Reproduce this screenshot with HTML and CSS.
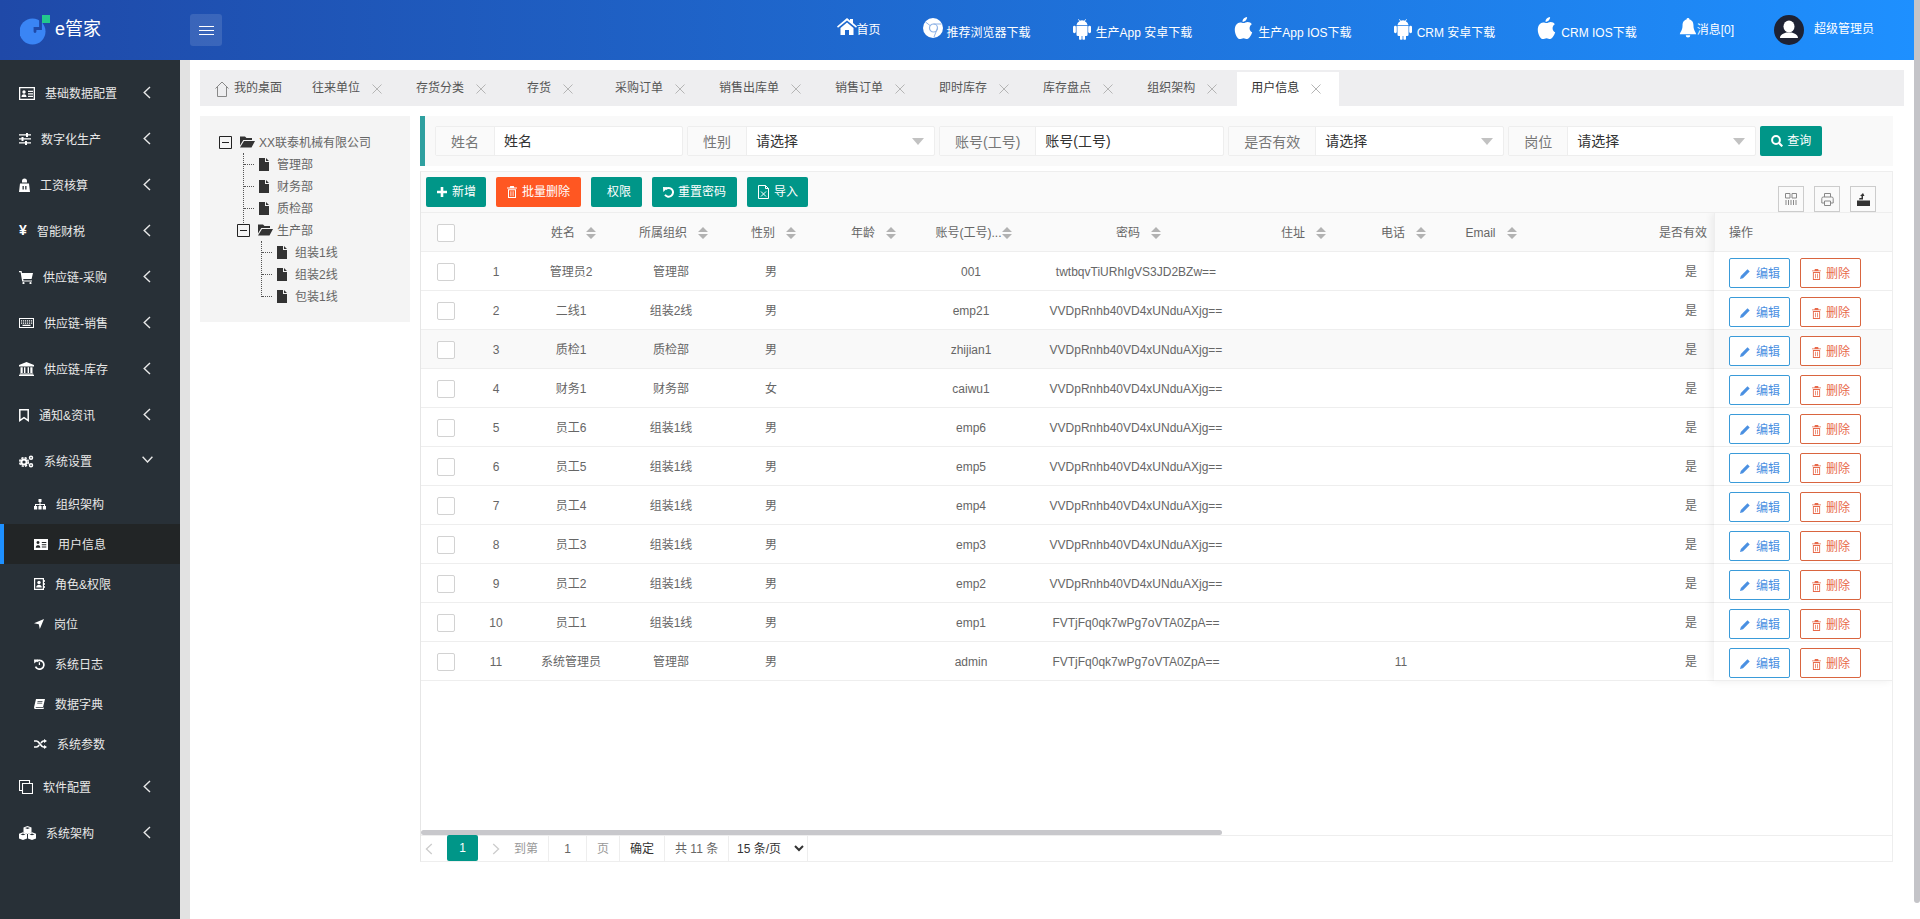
FILE: index.html
```html
<!DOCTYPE html>
<html lang="zh">
<head>
<meta charset="utf-8">
<title>e管家</title>
<link rel="stylesheet" href="styles.css">
</head>
<body>
<svg class="sprite" xmlns="http://www.w3.org/2000/svg">
  <symbol id="s-card" viewBox="0 0 16 13"><path fill-rule="evenodd" d="M0 0h16v13H0ZM1.300 1.300v10.400h13.400V1.300Z"/><circle cx="5" cy="5" r="1.700"/><path d="M2.500 10c0-2 1.200-2.700 2.500-2.700S7.500 8 7.500 10ZM9 3.800h5V5H9ZM9 6.300h5v1.200H9ZM9 8.800h5V10H9Z"/></symbol>
  <symbol id="s-cardfill" viewBox="0 0 14 11"><path fill-rule="evenodd" d="M0 0h14v11H0ZM4 2a1.500 1.500 0 1 0 .01 0ZM1.800 8.800h4.500c0-2-1-2.600-2.200-2.600S1.800 6.800 1.800 8.800ZM7.800 3v1h4.500V3ZM7.800 5.200v1h4.500v-1ZM7.800 7.400v1h4.500v-1Z"/></symbol>
  <symbol id="s-sliders" viewBox="0 0 12 12"><path d="M0 1.300h12v1.300H0ZM0 5.300h12v1.300H0ZM0 9.300h12v1.300H0Z"/><path d="M7 0h2v4H7ZM2.500 4h2v4h-2ZM6 8h2v4H6Z"/></symbol>
  <symbol id="s-secret" viewBox="0 0 11 14"><path fill-rule="evenodd" d="M3 3a2.500 2.500 0 0 1 5 0v1.500H3ZM1 5.500h9l1 8.500H0ZM3.500 8v3.500h1.300V8ZM6.200 8v3.500h1.300V8Z"/></symbol>
  <symbol id="s-cart" viewBox="0 0 14 13"><path d="M0 0h2.600L3 2h11l-1.400 6H4.200l.3 1.400H13v1.100H3.200L1.600 1.200H0Z"/><circle cx="4.500" cy="12" r="1.100"/><circle cx="11.500" cy="12" r="1.100"/></symbol>
  <symbol id="s-keyboard" viewBox="0 0 15 10"><path fill-rule="evenodd" d="M0 0h15v10H0ZM1 1v8h13V1Z"/><path d="M2 2.300h1.200v1.200H2ZM4 2.300h1.200v1.200H4ZM6 2.300h1.200v1.200H6ZM8 2.300h1.200v1.200H8ZM10 2.300h1.200v1.200H10ZM12 2.300h1.200v1.200H12ZM2 4.500h1.200v1.200H2ZM4 4.500h1.200v1.200H4ZM6 4.500h1.200v1.200H6ZM8 4.500h1.200v1.200H8ZM10 4.500h1.200v1.200H10ZM12 4.500h1.200v1.200H12ZM3.500 6.800h8v1.100h-8Z"/></symbol>
  <symbol id="s-bank" viewBox="0 0 15 14"><path d="M7.500 0 15 3v1.400H0V3ZM1.500 5.200h2.200v5.900H1.500ZM5 5.200h1.400v5.900H5ZM8.600 5.200H10v5.900H8.600ZM11.300 5.200h2.200v5.900h-2.200ZM.8 11.500h13.400v1H.8ZM0 12.800h15V14H0Z"/></symbol>
  <symbol id="s-bookmark" viewBox="0 0 10 13"><path fill="none" stroke="currentColor" stroke-width="1.500" d="M.8.800h8.400v10.700L5 8.600.8 11.500Z"/></symbol>
  <symbol id="s-cogs" viewBox="0 0 15 13"><circle cx="5" cy="7" r="2.600" fill="none" stroke="currentColor" stroke-width="2"/><circle cx="5" cy="7" r="4.300" fill="none" stroke="currentColor" stroke-width="1.600" stroke-dasharray="2.200 1.200"/><circle cx="12" cy="2.800" r="1.500" fill="none" stroke="currentColor" stroke-width="1.500"/><circle cx="12" cy="10.200" r="1.500" fill="none" stroke="currentColor" stroke-width="1.500"/></symbol>
  <symbol id="s-sitemap" viewBox="0 0 12 11"><path d="M4.500 0h3v3h-3ZM5.500 3h1v2h4.500v2h-1V6H6.500v1h-1V6H2v1H1V5h4.500ZM0 7h3.200v3.500H0ZM4.400 7h3.200v3.500H4.400ZM8.800 7H12v3.500H8.800Z"/></symbol>
  <symbol id="s-addr" viewBox="0 0 11 12"><path fill-rule="evenodd" d="M0 0h10v12H0ZM1.200 1.200v9.600h7.600V1.200Z"/><circle cx="5" cy="4.500" r="1.700"/><path d="M2.200 9.500c0-2 1.300-2.800 2.800-2.800s2.800.8 2.800 2.800ZM10.200 2H11v2h-.8ZM10.200 5H11v2h-.8ZM10.200 8H11v2h-.8Z"/></symbol>
  <symbol id="s-arrow" viewBox="0 0 10 10"><path d="M10 0 5.800 10 4.800 5.200 0 4.200Z"/></symbol>
  <symbol id="s-history" viewBox="0 0 11 11"><path fill="none" stroke="currentColor" stroke-width="1.700" d="M2.400 2.600A4.400 4.400 0 1 1 1.500 7.700"/><path d="M0 .4l4.500.1L.3 4.600ZM4.800 3.200H6v2.700H4.800Z"/></symbol>
  <symbol id="s-book" viewBox="0 0 11 10"><path fill-rule="evenodd" d="M2 0h9L9 8.300H2.300c-.8 0-.9.600-.4.800H9.300l.2-.9.500.2-.4 1.600H1.300C.3 10-.1 9 .1 8ZM3.500 2v.8h5V2ZM3.200 3.800v.8h5v-.8Z"/></symbol>
  <symbol id="s-random" viewBox="0 0 13 10"><path fill="none" stroke="currentColor" stroke-width="1.700" d="M0 2h2.500c3 0 4 6 7 6H11M0 8h2.500c1.300 0 2-1 2.700-2M7 4c.7-1 1.400-2 2.500-2H11"/><path d="M10 0l3 2-3 2ZM10 6l3 2-3 2Z"/></symbol>
  <symbol id="s-clone" viewBox="0 0 14 14"><path fill="none" stroke="currentColor" stroke-width="1.100" d="M3.500 10.500h-3v-10h10v3"/><path fill="none" stroke="currentColor" stroke-width="1.100" d="M3.500 3.500h10v10h-10Z"/></symbol>
  <symbol id="s-cubes" viewBox="0 0 17 14"><path fill-rule="evenodd" d="M8.500 0l4 1.500v5l-4 1.500-4-1.500v-5ZM8.500 1.200 6 2.100l2.500.9 2.500-.9Z"/><path fill-rule="evenodd" d="M4 6.300l4 1.500v4.700L4 14l-4-1.500V7.800ZM4 7.500l-2.500.9L4 9.300l2.500-.9Z"/><path fill-rule="evenodd" d="M13 6.300l4 1.500v4.700L13 14l-4-1.500V7.800ZM13 7.500l-2.500.9 2.500.9 2.500-.9Z"/></symbol>
  <symbol id="s-chev" viewBox="0 0 8 13"><path fill="none" stroke="currentColor" stroke-width="1.400" d="M7 1 1.200 6.500 7 12"/></symbol>
  <symbol id="s-chevd" viewBox="0 0 11 7"><path fill="none" stroke="currentColor" stroke-width="1.400" d="M.6.800 5.500 6 10.400.800"/></symbol>
  <symbol id="s-home" viewBox="0 0 20 17"><path d="M10 0l3 2.500V1h3v4.100L20 8.600l-1 1.200-9-7.300-9 7.300-1-1.200ZM3.500 9.900 10 4.500l6.500 5.400V17H12v-5H8v5H3.500Z"/></symbol>
  <symbol id="s-chrome" viewBox="0 0 20 20"><circle cx="10" cy="10" r="10" fill="#fff"/><circle cx="10.500" cy="10" r="4" fill="none" stroke="#8fb3e6" stroke-width="1.200"/><path fill="none" stroke="#8fb3e6" stroke-width="1" d="M14.500 10 11 19M7 7.500 2.500 4M10.500 6h8"/></symbol>
  <symbol id="s-android" viewBox="0 0 18 24" preserveAspectRatio="none"><path d="M3.500 7.500a5.500 5.500 0 0 1 2.700-4L5 1.400l.5-.4 1.300 2.100a5 5 0 0 1 4.400 0L12.500 1l.5.4-1.200 2.100a5.500 5.500 0 0 1 2.700 4Z"/><path d="M3.500 8.500h11v9.700a1.300 1.300 0 0 1-1.300 1.300H12v3a1.300 1.300 0 0 1-2.600 0v-3H8.600v3a1.300 1.300 0 0 1-2.600 0v-3H4.800a1.300 1.300 0 0 1-1.300-1.300Z"/><rect x="0" y="8.500" width="2.800" height="8" rx="1.400"/><rect x="15.200" y="8.500" width="2.800" height="8" rx="1.400"/></symbol>
  <symbol id="s-apple" viewBox="0 0 19 24"><path d="M13.400 0c.2 2.700-2.200 5.400-5 5.200C8.200 2.600 10.700.2 13.400 0ZM9.600 6.600c1.200 0 2.600-1.200 4.500-1.200 1.900 0 3.500.9 4.500 2.400-3.600 2.200-3 7.300.4 8.900-.9 2.800-3.200 7.300-5.500 7.300-1.400 0-2.200-.9-3.900-.9-1.800 0-2.700.9-4 .9C2.700 24 0 18.500 0 13.800 0 9 2.900 5.900 5.800 5.900c1.500 0 2.800.7 3.800.7Z"/></symbol>
  <symbol id="s-bell" viewBox="0 0 18 22"><path d="M9 0a1.600 1.600 0 0 1 1.600 1.700C14 2.500 15 5.500 15 8c0 6 3 8 3 10H0c0-2 3-4 3-10 0-2.500 1-5.500 4.400-6.300A1.600 1.600 0 0 1 9 0ZM6.500 19h5a2.500 2.500 0 0 1-5 0Z"/></symbol>
  <symbol id="s-avatar" viewBox="0 0 30 30"><circle cx="15" cy="15" r="15" fill="#1e2233"/><ellipse cx="15" cy="11.500" rx="5.500" ry="6" fill="#fff"/><path fill="#fff" d="M6 23c0-3.500 4-4.500 6-5.500h6c2 1 6 2 6 5.500Z"/></symbol>
  <symbol id="s-homeline" viewBox="0 0 14 16"><path fill="none" stroke="currentColor" stroke-width="1" d="M.5 7.500 7 1l6.500 6.500M2.500 6v9.500h9V6"/></symbol>
  <symbol id="s-x" viewBox="0 0 10 10"><path fill="none" stroke="currentColor" stroke-width="1" d="M.5.500l9 9M9.500.500l-9 9"/></symbol>
  <symbol id="s-minus" viewBox="0 0 13 13"><path fill="none" stroke="currentColor" stroke-width="1" d="M.5.500h12v12H.500ZM3 6.500h7"/></symbol>
  <symbol id="s-folder" viewBox="0 0 15 12"><path d="M0 .500h5L6.500 2H12v2H3.300L0 9.500ZM4 5h11l-3.500 6.500H0Z"/></symbol>
  <symbol id="s-file" viewBox="0 0 10 13"><path d="M0 0h6v4h4v9H0ZM7 0l3 3H7Z"/></symbol>
  <symbol id="s-sort" viewBox="0 0 10 12"><path d="M5 0l5 5H0ZM0 7h10l-5 5Z"/></symbol>
  <symbol id="s-plus" viewBox="0 0 10 10"><path d="M3.700 0h2.600v3.700H10v2.600H6.300V10H3.700V6.300H0V3.700h3.700Z"/></symbol>
  <symbol id="s-trash" viewBox="0 0 10 12"><path fill-rule="evenodd" d="M3.200 0h3.600l.5 1.500H10v1H0v-1h2.700ZM1 3.300h8V12H1ZM2 4.300V11h6V4.300Z"/><path d="M3.500 5.200h.8v5h-.8ZM5.700 5.200h.8v5h-.8Z"/></symbol>
  <symbol id="s-undo" viewBox="0 0 11 12"><path fill="none" stroke="currentColor" stroke-width="2" d="M2.500 3.200A4.400 4.400 0 1 1 2 8.800"/><path d="M0 1l5 .2L.3 6Z"/></symbol>
  <symbol id="s-excel" viewBox="0 0 11 14"><path fill="none" stroke="currentColor" stroke-width="1" d="M.5.500h7l3 3v10H.5ZM7.500.500v3h3M3 6.500l5 5M8 6.500l-5 5"/></symbol>
  <symbol id="s-search" viewBox="0 0 12 12"><circle cx="5" cy="5" r="3.900" fill="none" stroke="currentColor" stroke-width="2"/><path stroke="currentColor" stroke-width="2.200" d="M8 8l3.300 3.300"/></symbol>
  <symbol id="s-pencil" viewBox="0 0 10 10"><path d="M7.500.300 9.700 2.500 3 9.200 0 10l.8-3Z"/></symbol>
  <symbol id="s-cols" viewBox="0 0 12 12"><path fill="none" stroke="currentColor" stroke-width="1" d="M.5.500h4.500v4.500H.5ZM7 .500h4.500v4.500H7ZM1 7v5M3.500 7v5M6 7v5M8.500 7v5M11 7v5"/></symbol>
  <symbol id="s-print" viewBox="0 0 13 13"><path fill="none" stroke="currentColor" stroke-width="1" d="M3.500 4V.5h6V4M3 10H.8V5.500a1.500 1.500 0 0 1 1.500-1.500h8.400a1.500 1.500 0 0 1 1.500 1.500V10H10M3.500 8h6v4.500h-6Z"/></symbol>
  <symbol id="s-export" viewBox="0 0 13 13"><path d="M0 7.500h13V13H0ZM2 6.500 2.500 5h2V3H3L6 0l1.500 3H6v3.500Z"/></symbol>
</svg>

<div class="app">
  <div class="page">
    <header class="top">
      <div class="brand">
        <svg class="logo" viewBox="0 0 30 30"><circle cx="12.500" cy="16.500" r="13" fill="#3a85f5"/><path fill="none" stroke="#1f49a8" stroke-width="2.800" stroke-linecap="round" d="M20.500 4V13.500H15v3"/><rect x="22" y="0" width="8" height="8" fill="#22c98d"/></svg>
        <span class="brand-name">e管家</span>
      </div>
      <button class="burger" type="button"><span></span><span></span><span></span></button>
      <nav class="top-nav">
        <a class="top-item tight"><svg class="ic ic-home"><use href="#s-home"/></svg><span class="top-text up">首页</span></a>
        <a class="top-item chrome-item"><svg class="ic ic-chrome"><use href="#s-chrome"/></svg><span class="top-text">推荐浏览器下载</span></a>
        <a class="top-item"><svg class="ic ic-android"><use href="#s-android"/></svg><span class="top-text">生产App 安卓下载</span></a>
        <a class="top-item"><svg class="ic ic-apple"><use href="#s-apple"/></svg><span class="top-text">生产App IOS下载</span></a>
        <a class="top-item"><svg class="ic ic-android"><use href="#s-android"/></svg><span class="top-text">CRM 安卓下载</span></a>
        <a class="top-item"><svg class="ic ic-apple"><use href="#s-apple"/></svg><span class="top-text">CRM IOS下载</span></a>
        <a class="top-item tight"><svg class="ic ic-bell"><use href="#s-bell"/></svg><span class="top-text up">消息[0]</span></a>
        <a class="top-user"><svg class="ic ic-avatar"><use href="#s-avatar"/></svg><span>超级管理员</span></a>
      </nav>
    </header>

    <div class="body">
      <aside class="side">
        <a class="nav-item"><svg class="ic ic-card"><use href="#s-card"/></svg><span>基础数据配置</span><svg class="ic ic-chev"><use href="#s-chev"/></svg></a>
        <a class="nav-item"><svg class="ic ic-sliders"><use href="#s-sliders"/></svg><span>数字化生产</span><svg class="ic ic-chev"><use href="#s-chev"/></svg></a>
        <a class="nav-item"><svg class="ic ic-secret"><use href="#s-secret"/></svg><span>工资核算</span><svg class="ic ic-chev"><use href="#s-chev"/></svg></a>
        <a class="nav-item"><b class="yen">¥</b><span>智能财税</span><svg class="ic ic-chev"><use href="#s-chev"/></svg></a>
        <a class="nav-item"><svg class="ic ic-cart"><use href="#s-cart"/></svg><span>供应链-采购</span><svg class="ic ic-chev"><use href="#s-chev"/></svg></a>
        <a class="nav-item"><svg class="ic ic-keyboard"><use href="#s-keyboard"/></svg><span>供应链-销售</span><svg class="ic ic-chev"><use href="#s-chev"/></svg></a>
        <a class="nav-item"><svg class="ic ic-bank"><use href="#s-bank"/></svg><span>供应链-库存</span><svg class="ic ic-chev"><use href="#s-chev"/></svg></a>
        <a class="nav-item"><svg class="ic ic-bookmark"><use href="#s-bookmark"/></svg><span>通知&amp;资讯</span><svg class="ic ic-chev"><use href="#s-chev"/></svg></a>
        <a class="nav-item"><svg class="ic ic-cogs"><use href="#s-cogs"/></svg><span>系统设置</span><svg class="ic ic-chevd"><use href="#s-chevd"/></svg></a>
        <a class="nav-sub"><svg class="ic ic-sitemap"><use href="#s-sitemap"/></svg><span>组织架构</span></a>
        <a class="nav-sub active"><svg class="ic ic-cardfill"><use href="#s-cardfill"/></svg><span>用户信息</span></a>
        <a class="nav-sub"><svg class="ic ic-addr"><use href="#s-addr"/></svg><span>角色&amp;权限</span></a>
        <a class="nav-sub"><svg class="ic ic-arrow"><use href="#s-arrow"/></svg><span>岗位</span></a>
        <a class="nav-sub"><svg class="ic ic-history"><use href="#s-history"/></svg><span>系统日志</span></a>
        <a class="nav-sub"><svg class="ic ic-book"><use href="#s-book"/></svg><span>数据字典</span></a>
        <a class="nav-sub"><svg class="ic ic-random"><use href="#s-random"/></svg><span>系统参数</span></a>
        <a class="nav-item"><svg class="ic ic-clone"><use href="#s-clone"/></svg><span>软件配置</span><svg class="ic ic-chev"><use href="#s-chev"/></svg></a>
        <a class="nav-item"><svg class="ic ic-cubes"><use href="#s-cubes"/></svg><span>系统架构</span><svg class="ic ic-chev"><use href="#s-chev"/></svg></a>
      </aside>
      <div class="gutter"></div>

      <main class="content">
        <div class="tabs">
          <a class="tab tab-home"><svg class="ic ic-homeline"><use href="#s-homeline"/></svg><span>我的桌面</span></a>
          <a class="tab"><span>往来单位</span><svg class="ic ic-x"><use href="#s-x"/></svg></a>
          <a class="tab"><span>存货分类</span><svg class="ic ic-x"><use href="#s-x"/></svg></a>
          <a class="tab tab-short"><span>存货</span><svg class="ic ic-x"><use href="#s-x"/></svg></a>
          <a class="tab"><span>采购订单</span><svg class="ic ic-x"><use href="#s-x"/></svg></a>
          <a class="tab"><span>销售出库单</span><svg class="ic ic-x"><use href="#s-x"/></svg></a>
          <a class="tab"><span>销售订单</span><svg class="ic ic-x"><use href="#s-x"/></svg></a>
          <a class="tab"><span>即时库存</span><svg class="ic ic-x"><use href="#s-x"/></svg></a>
          <a class="tab"><span>库存盘点</span><svg class="ic ic-x"><use href="#s-x"/></svg></a>
          <a class="tab"><span>组织架构</span><svg class="ic ic-x"><use href="#s-x"/></svg></a>
          <a class="tab tab-active"><span>用户信息</span><svg class="ic ic-x"><use href="#s-x"/></svg></a>
        </div>

        <div class="work">
          <section class="tree">
            <div class="tree-row"><svg class="ic ic-minus"><use href="#s-minus"/></svg><svg class="ic ic-folder"><use href="#s-folder"/></svg><span>XX联泰机械有限公司</span></div>
            <div class="tree-kids kids-top">
              <div class="tree-row leaf"><svg class="ic ic-file"><use href="#s-file"/></svg><span>管理部</span></div>
              <div class="tree-row leaf"><svg class="ic ic-file"><use href="#s-file"/></svg><span>财务部</span></div>
              <div class="tree-row leaf"><svg class="ic ic-file"><use href="#s-file"/></svg><span>质检部</span></div>
              <div class="tree-row branch"><svg class="ic ic-minus"><use href="#s-minus"/></svg><svg class="ic ic-folder"><use href="#s-folder"/></svg><span>生产部</span></div>
              <div class="tree-kids kids-sub">
                <div class="tree-row leaf"><svg class="ic ic-file"><use href="#s-file"/></svg><span>组装1线</span></div>
                <div class="tree-row leaf"><svg class="ic ic-file"><use href="#s-file"/></svg><span>组装2线</span></div>
                <div class="tree-row leaf"><svg class="ic ic-file"><use href="#s-file"/></svg><span>包装1线</span></div>
              </div>
            </div>
          </section>

          <section class="panel">
            <div class="search">
              <div class="field"><label>姓名</label><div class="value">姓名</div></div>
              <div class="field"><label>性别</label><div class="value select">请选择</div></div>
              <div class="field"><label>账号(工号)</label><div class="value">账号(工号)</div></div>
              <div class="field"><label>是否有效</label><div class="value select">请选择</div></div>
              <div class="field"><label>岗位</label><div class="value select">请选择</div></div>
              <button class="btn btn-query" type="button"><svg class="ic ic-search"><use href="#s-search"/></svg>查询</button>
            </div>

            <div class="grid">
              <div class="toolbar">
                <button class="btn btn-add" type="button"><svg class="ic ic-plus"><use href="#s-plus"/></svg>新增</button>
                <button class="btn btn-danger" type="button"><svg class="ic ic-trash"><use href="#s-trash"/></svg>批量删除</button>
                <button class="btn btn-perm" type="button">权限</button>
                <button class="btn btn-reset" type="button"><svg class="ic ic-undo"><use href="#s-undo"/></svg>重置密码</button>
                <button class="btn btn-import" type="button"><svg class="ic ic-excel"><use href="#s-excel"/></svg>导入</button>
                <div class="tools">
                  <span class="tool"><svg class="ic ic-cols"><use href="#s-cols"/></svg></span>
                  <span class="tool"><svg class="ic ic-print"><use href="#s-print"/></svg></span>
                  <span class="tool dark"><svg class="ic ic-export"><use href="#s-export"/></svg></span>
                </div>
              </div>

              <div class="grid-body">
                <table class="data">
                  <colgroup><col class="c50"><col class="c50"><col class="c100"><col class="c100"><col class="c100"><col class="c100"><col class="c100"><col class="c230"><col class="c100"><col class="c100"><col class="c75"><col class="c330"></colgroup>
                  <thead><tr>
                    <th><span class="check"></span></th><th></th>
                    <th class="s">姓名<svg class="ic ic-sort"><use href="#s-sort"/></svg></th>
                    <th class="s">所属组织<svg class="ic ic-sort"><use href="#s-sort"/></svg></th>
                    <th class="s">性别<svg class="ic ic-sort"><use href="#s-sort"/></svg></th>
                    <th class="s">年龄<svg class="ic ic-sort"><use href="#s-sort"/></svg></th>
                    <th class="s tight-th">账号(工号)...<svg class="ic ic-sort flush"><use href="#s-sort"/></svg></th>
                    <th class="s">密码<svg class="ic ic-sort"><use href="#s-sort"/></svg></th>
                    <th class="s">住址<svg class="ic ic-sort"><use href="#s-sort"/></svg></th>
                    <th class="s">电话<svg class="ic ic-sort"><use href="#s-sort"/></svg></th>
                    <th class="s">Email<svg class="ic ic-sort"><use href="#s-sort"/></svg></th>
                    <th class="s">是否有效<svg class="ic ic-sort"><use href="#s-sort"/></svg></th>
                  </tr></thead>
                  <tbody>
                    <tr><td><span class="check"></span></td><td>1</td><td>管理员2</td><td>管理部</td><td>男</td><td></td><td>001</td><td>twtbqvTiURhIgVS3JD2BZw==</td><td></td><td></td><td></td><td>是</td></tr>
                    <tr><td><span class="check"></span></td><td>2</td><td>二线1</td><td>组装2线</td><td>男</td><td></td><td>emp21</td><td>VVDpRnhb40VD4xUNduAXjg==</td><td></td><td></td><td></td><td>是</td></tr>
                    <tr class="hover"><td><span class="check"></span></td><td>3</td><td>质检1</td><td>质检部</td><td>男</td><td></td><td>zhijian1</td><td>VVDpRnhb40VD4xUNduAXjg==</td><td></td><td></td><td></td><td>是</td></tr>
                    <tr><td><span class="check"></span></td><td>4</td><td>财务1</td><td>财务部</td><td>女</td><td></td><td>caiwu1</td><td>VVDpRnhb40VD4xUNduAXjg==</td><td></td><td></td><td></td><td>是</td></tr>
                    <tr><td><span class="check"></span></td><td>5</td><td>员工6</td><td>组装1线</td><td>男</td><td></td><td>emp6</td><td>VVDpRnhb40VD4xUNduAXjg==</td><td></td><td></td><td></td><td>是</td></tr>
                    <tr><td><span class="check"></span></td><td>6</td><td>员工5</td><td>组装1线</td><td>男</td><td></td><td>emp5</td><td>VVDpRnhb40VD4xUNduAXjg==</td><td></td><td></td><td></td><td>是</td></tr>
                    <tr><td><span class="check"></span></td><td>7</td><td>员工4</td><td>组装1线</td><td>男</td><td></td><td>emp4</td><td>VVDpRnhb40VD4xUNduAXjg==</td><td></td><td></td><td></td><td>是</td></tr>
                    <tr><td><span class="check"></span></td><td>8</td><td>员工3</td><td>组装1线</td><td>男</td><td></td><td>emp3</td><td>VVDpRnhb40VD4xUNduAXjg==</td><td></td><td></td><td></td><td>是</td></tr>
                    <tr><td><span class="check"></span></td><td>9</td><td>员工2</td><td>组装1线</td><td>男</td><td></td><td>emp2</td><td>VVDpRnhb40VD4xUNduAXjg==</td><td></td><td></td><td></td><td>是</td></tr>
                    <tr><td><span class="check"></span></td><td>10</td><td>员工1</td><td>组装1线</td><td>男</td><td></td><td>emp1</td><td>FVTjFq0qk7wPg7oVTA0ZpA==</td><td></td><td></td><td></td><td>是</td></tr>
                    <tr><td><span class="check"></span></td><td>11</td><td>系统管理员</td><td>管理部</td><td>男</td><td></td><td>admin</td><td>FVTjFq0qk7wPg7oVTA0ZpA==</td><td></td><td>11</td><td></td><td>是</td></tr>
                  </tbody>
                </table>

                <table class="fixed">
                  <thead><tr><th>操作</th></tr></thead>
                  <tbody>
                    <tr><td><button class="op op-edit" type="button"><svg class="ic ic-pencil"><use href="#s-pencil"/></svg>编辑</button><button class="op op-del" type="button"><svg class="ic ic-trash2"><use href="#s-trash"/></svg>删除</button></td></tr>
                    <tr><td><button class="op op-edit" type="button"><svg class="ic ic-pencil"><use href="#s-pencil"/></svg>编辑</button><button class="op op-del" type="button"><svg class="ic ic-trash2"><use href="#s-trash"/></svg>删除</button></td></tr>
                    <tr class="hover"><td><button class="op op-edit" type="button"><svg class="ic ic-pencil"><use href="#s-pencil"/></svg>编辑</button><button class="op op-del" type="button"><svg class="ic ic-trash2"><use href="#s-trash"/></svg>删除</button></td></tr>
                    <tr><td><button class="op op-edit" type="button"><svg class="ic ic-pencil"><use href="#s-pencil"/></svg>编辑</button><button class="op op-del" type="button"><svg class="ic ic-trash2"><use href="#s-trash"/></svg>删除</button></td></tr>
                    <tr><td><button class="op op-edit" type="button"><svg class="ic ic-pencil"><use href="#s-pencil"/></svg>编辑</button><button class="op op-del" type="button"><svg class="ic ic-trash2"><use href="#s-trash"/></svg>删除</button></td></tr>
                    <tr><td><button class="op op-edit" type="button"><svg class="ic ic-pencil"><use href="#s-pencil"/></svg>编辑</button><button class="op op-del" type="button"><svg class="ic ic-trash2"><use href="#s-trash"/></svg>删除</button></td></tr>
                    <tr><td><button class="op op-edit" type="button"><svg class="ic ic-pencil"><use href="#s-pencil"/></svg>编辑</button><button class="op op-del" type="button"><svg class="ic ic-trash2"><use href="#s-trash"/></svg>删除</button></td></tr>
                    <tr><td><button class="op op-edit" type="button"><svg class="ic ic-pencil"><use href="#s-pencil"/></svg>编辑</button><button class="op op-del" type="button"><svg class="ic ic-trash2"><use href="#s-trash"/></svg>删除</button></td></tr>
                    <tr><td><button class="op op-edit" type="button"><svg class="ic ic-pencil"><use href="#s-pencil"/></svg>编辑</button><button class="op op-del" type="button"><svg class="ic ic-trash2"><use href="#s-trash"/></svg>删除</button></td></tr>
                    <tr><td><button class="op op-edit" type="button"><svg class="ic ic-pencil"><use href="#s-pencil"/></svg>编辑</button><button class="op op-del" type="button"><svg class="ic ic-trash2"><use href="#s-trash"/></svg>删除</button></td></tr>
                    <tr><td><button class="op op-edit" type="button"><svg class="ic ic-pencil"><use href="#s-pencil"/></svg>编辑</button><button class="op op-del" type="button"><svg class="ic ic-trash2"><use href="#s-trash"/></svg>删除</button></td></tr>
                  </tbody>
                </table>
              </div>

              <div class="hscroll"><div class="hthumb"></div></div>

              <div class="pager">
                <span class="pg-prev"><svg class="ic ic-pgchev"><use href="#s-chev"/></svg></span>
                <span class="pg-cur">1</span>
                <span class="pg-next"><svg class="ic ic-pgchev flip"><use href="#s-chev"/></svg></span>
                <span class="pg-text pg-goto">到第</span>
                <span class="pg-input">1</span>
                <span class="pg-text">页</span>
                <span class="pg-ok">确定</span>
                <span class="pg-total">共 11 条</span>
                <select class="pg-size"><option>15 条/页</option></select>
              </div>
            </div>
          </section>
        </div>
      </main>
    </div>
  </div>
  <div class="thumb"></div>
</div>
</body>
</html>
```

FILE: styles.css
```css
* { box-sizing: border-box; }
html, body { margin: 0; height: 100%; overflow: hidden; background: #fff; }
body { font: 12px/1.4 "Liberation Sans", "Noto Sans CJK SC", sans-serif; color: #666; }
.sprite { position: absolute; width: 0; height: 0; overflow: hidden; }
.ic { display: block; flex: none; fill: currentColor; }
button { font: inherit; margin: 0; cursor: pointer; }

.app { display: flex; height: 919px; }
.page { width: 1914px; display: flex; flex-direction: column; }
.thumb { width: 6px; height: 903px; background: #c4c4c8; border-radius: 0 0 3px 3px; }

/* top bar */
.top { height: 60px; flex: none; display: flex; align-items: center; padding-right: 40px; color: #fff; background: linear-gradient(to right, #1f49a8, #1e90ff); }
.brand { width: 190px; display: flex; align-items: center; padding-left: 20px; height: 60px; }
.logo { width: 30px; height: 30px; flex: none; }
.brand-name { font-size: 18px; line-height: 24px; margin: -2px 0 0 5px; }
.burger { width: 32px; height: 32px; padding: 0; border: 0; border-radius: 3px; background: rgba(255,255,255,.12); display: flex; flex-direction: column; align-items: center; justify-content: center; gap: 3px; }
.burger span { display: block; width: 15px; height: 1px; background: #fff; }
.top-nav { margin-left: auto; display: flex; align-items: flex-start; gap: 42px; height: 60px; }
.top-item { display: flex; align-items: flex-start; gap: 5px; margin-top: 17px; }
.top-item.tight { gap: 0; }
.chrome-item { gap: 4px; }
.top-text { line-height: 20px; margin-top: 6px; white-space: nowrap; }
.top-text.up { margin-top: 3px; }
.top-user { display: flex; align-items: center; gap: 10px; height: 60px; margin-left: -2px; }
.top-user span { margin-top: -1px; }
.ic-home { width: 20px; height: 17px; margin-top: 1px; }
.ic-chrome { width: 20px; height: 20px; margin-top: 1px; }
.ic-android { width: 18px; height: 22px; margin-top: 1px; }
.ic-apple { width: 19px; height: 22px; }
.ic-bell { width: 18px; height: 20px; margin-top: 1px; }
.ic-avatar { width: 30px; height: 30px; }

/* body */
.body { flex: 1; display: flex; min-height: 0; }
.side { width: 180px; flex: none; background: #283037; color: #e8e8e8; padding-top: 10px; }
.gutter { width: 10px; flex: none; background: #e2e2e2; }
.nav-item { height: 46px; display: flex; align-items: center; gap: 10px; padding-left: 19px; white-space: nowrap; }
.nav-item span { line-height: 16px; margin-top: 1px; }
.nav-sub { height: 40px; display: flex; align-items: center; gap: 10px; padding-left: 34px; }
.nav-sub span { line-height: 16px; margin-top: 2px; }
.nav-sub.active { background: #222526; border-left: 4px solid #1e90ff; padding-left: 30px; }
.ic-chev { width: 8px; height: 13px; margin-left: auto; margin-right: 29px; margin-top: -2px; }
.ic-chevd { width: 11px; height: 7px; margin-left: auto; margin-right: 27px; margin-top: -4px; }
.yen { width: 8px; font-size: 14px; line-height: 16px; color: #fff; font-weight: 700; margin-top: -2px; }
.ic-card { width: 16px; height: 13px; color: #fff; }
.ic-sliders { width: 12px; height: 12px; color: #fff; }
.ic-secret { width: 11px; height: 14px; color: #fff; }
.ic-cart { width: 14px; height: 13px; color: #fff; }
.ic-keyboard { width: 15px; height: 10px; color: #fff; }
.ic-bank { width: 15px; height: 14px; color: #fff; }
.ic-bookmark { width: 10px; height: 13px; color: #fff; }
.ic-cogs { width: 15px; height: 13px; color: #fff; }
.ic-sitemap { width: 12px; height: 11px; color: #fff; }
.ic-cardfill { width: 14px; height: 11px; color: #fff; }
.ic-addr { width: 11px; height: 12px; color: #fff; }
.ic-arrow { width: 10px; height: 10px; color: #fff; }
.ic-history { width: 11px; height: 11px; color: #fff; }
.ic-book { width: 11px; height: 10px; color: #fff; }
.ic-random { width: 13px; height: 10px; color: #fff; }
.ic-clone { width: 14px; height: 14px; color: #fff; }
.ic-cubes { width: 17px; height: 14px; color: #fff; }

/* content */
.content { flex: 1; min-width: 0; padding: 10px 10px 0; display: flex; flex-direction: column; }
.tabs { height: 36px; flex: none; background: #eeeef0; display: flex; align-items: flex-end; }
.tab { height: 34px; padding: 0 20px 0 14px; display: flex; align-items: center; gap: 12px; color: #555; white-space: nowrap; }
.tab span { margin-top: -1px; }
.tab-home { padding: 0 16px 0 15px; gap: 5px; width: 98px; }
.tab-short { padding: 0 28px 0 21px; }
.tab-active { background: #fff; color: #333; width: 102px; padding-right: 18px; }
.ic-homeline { width: 14px; height: 16px; color: #888; }
.ic-x { width: 10px; height: 10px; color: #b5b5b5; }

.work { display: flex; align-items: flex-start; gap: 10px; margin-top: 10px; }

/* tree */
.tree { width: 210px; flex: none; background: #f4f4f4; padding: 15px 0 15px 19px; color: #666; }
.tree-row { height: 22px; display: flex; align-items: center; position: relative; white-space: nowrap; }
.tree-row span { margin-top: 2px; }
.tree-row .ic-minus { margin-right: 8px; }
.tree-row .ic-folder { margin-right: 4px; }
.ic-minus { width: 13px; height: 13px; color: #222; }
.ic-folder { width: 15px; height: 12px; color: #333; }
.ic-file { width: 10px; height: 13px; color: #333; margin-right: 8px; }
.tree-kids { position: relative; }
.tree-kids::before { content: ""; position: absolute; left: 0; top: 0; border-left: 1px dotted #555; }
.kids-top { margin-left: 24px; }
.kids-top::before { height: 72px; }
.kids-sub { margin-left: 18px; }
.kids-sub::before { height: 56px; }
.leaf { padding-left: 16px; }
.leaf::before { content: ""; position: absolute; left: 1px; top: 11px; width: 10px; border-top: 1px dotted #555; }
.branch .ic-minus { margin-left: -6px; background: #f4f4f4; position: relative; }

/* search */
.panel { width: 1473px; flex: none; }
.search { height: 50px; background: #f9f9f9; border-left: 5px solid #2fa0a0; padding-left: 10px; display: flex; align-items: center; gap: 4px; }
.field { height: 30px; display: flex; border: 1px solid #eee; border-radius: 2px; background: #fff; }
.field label { padding: 0 15px; line-height: 30px; font-size: 14px; color: #777; background: #fafafa; border-right: 1px solid #eee; white-space: nowrap; }
.value { width: 187px; padding-left: 9px; line-height: 28px; font-size: 14px; color: #333; position: relative; }
.select::after { content: ""; position: absolute; right: 10px; top: 11px; border: 6px solid transparent; border-bottom: 0; border-top: 7px solid #c2c2c2; }

.btn { height: 30px; border: 0; border-radius: 2px; padding: 0 11px; color: #fff; background: #009688; display: inline-flex; align-items: center; white-space: nowrap; flex: none; }
.btn-query { width: 62px; padding: 0 10px 0 11px; gap: 4px; }
.ic-search { width: 12px; height: 12px; }
.ic-plus { width: 10px; height: 10px; margin-right: 5px; }
.ic-trash { width: 10px; height: 12px; margin-right: 5px; }
.ic-undo { width: 11px; height: 12px; margin-right: 4px; }
.ic-excel { width: 11px; height: 14px; margin-right: 5px; }
.btn-add { width: 60px; }
.btn-danger { background: #ff5722; width: 85px; }
.btn-perm { width: 51px; padding-left: 16px; }
.btn-reset { width: 85px; }
.btn-import { width: 61px; }

/* grid */
.grid { margin-top: 5px; border: 1px solid #eee; border-left-color: #e6e6e6; }
.toolbar { height: 41px; background: #fafafa; border-bottom: 1px solid #eee; display: flex; align-items: center; gap: 10px; padding: 0 16px 0 5px; }
.tools { margin-left: auto; align-self: flex-end; display: flex; gap: 10px; }
.tool { width: 26px; height: 26px; border: 1px solid #ccc; display: flex; align-items: center; justify-content: center; color: #888; }
.tool.dark { color: #333; }
.ic-cols { width: 12px; height: 12px; }
.ic-print { width: 13px; height: 13px; }
.ic-export { width: 13px; height: 13px; }

.grid-body { height: 617px; position: relative; overflow: hidden; }
table { border-collapse: separate; border-spacing: 0; table-layout: fixed; }
.data { width: 1435px; }
.c50 { width: 50px; } .c75 { width: 75px; } .c100 { width: 100px; } .c230 { width: 230px; } .c330 { width: 330px; }
th, td { height: 39px; padding: 2px 0 0; font-weight: 400; text-align: center; border-bottom: 1px solid #eee; color: #666; white-space: nowrap; }
th { background: #fafafa; height: 39px; }
th.s { padding-left: 5px; }
.ic-sort { display: inline-block; width: 10px; height: 12px; margin-left: 11px; vertical-align: -2px; color: #b2b2b2; }
.ic-sort.flush { margin-left: 0; }
.tight-th { padding-left: 6px; }
.check { display: inline-block; width: 18px; height: 18px; border: 1px solid #d2d2d2; border-radius: 2px; background: #fff; vertical-align: middle; }
.hover td { background: #f9f9f9; }

.fixed { position: absolute; top: 0; right: 0; width: 178px; background: #fff; box-shadow: -2px 0 8px rgba(0,0,0,.07); }
.fixed th { text-align: left; padding-left: 14px; border-left: 1px solid #eee; }
.fixed td { text-align: left; padding: 4px 0 0 15px; }
.op { width: 61px; height: 30px; background: #fff; border: 1px solid; border-radius: 2px; padding: 2px 0 0 10px; display: inline-flex; align-items: center; vertical-align: top; }
.op-edit { border-color: #3a9bd9; color: #4a90e2; margin-right: 10px; }
.op-del { border-color: #d9653f; color: #e8694a; }
.ic-pencil { width: 10px; height: 10px; margin-right: 6px; }
.ic-trash2 { width: 9px; height: 11px; margin-right: 5px; margin-left: 1px; }

.hscroll { height: 5px; }
.hthumb { width: 801px; height: 5px; background: #c8c8cc; border-radius: 3px; }

.pager { height: 26px; display: flex; align-items: stretch; color: #888; line-height: 26px; border-top: 1px solid #eee; margin-top: 0; }
.pg-prev { width: 26px; padding: 7px 0 0 4px; color: #ccc; }
.pg-next { width: 36px; padding: 7px 0 0 14px; color: #ccc; }
.pg-cur { width: 31px; height: 26px; margin-top: -1px; background: #009688; color: #fff; text-align: center; border-radius: 2px; }
.ic-pgchev { width: 8px; height: 12px; }
.flip { transform: scaleX(-1); }
.pg-text { padding: 0 10px; color: #999; }
.pg-goto { padding: 0 10px 0 0; }
.pg-input { width: 39px; text-align: center; border-left: 1px solid #eee; border-right: 1px solid #eee; color: #666; }
.pg-ok { width: 46px; text-align: center; color: #333; border-left: 1px solid #eee; border-right: 1px solid #eee; }
.pg-total { padding: 0 10px; color: #666; white-space: nowrap; width: 63px; }
.pg-size { width: 80px; height: 25px; border: 1px solid #eee; border-top: 0; border-bottom: 0; background: #fff; font: inherit; color: #333; padding-left: 4px; outline: 0; }
```
